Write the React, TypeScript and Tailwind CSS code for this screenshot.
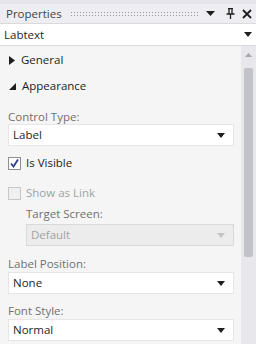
const font = { fontFamily: '"Open Sans", "Noto Sans", sans-serif' }

function Caret({ disabled }: { disabled?: boolean }) {
  return (
    <svg width="8" height="5" viewBox="0 0 8 5" className="shrink-0">
      <path d="M0 0 H8 L4 5 Z" fill={disabled ? '#c4c4c4' : '#1e1e1e'} />
    </svg>
  )
}

function Select({ value, disabled }: { value: string; disabled?: boolean }) {
  return (
    <div
      className={
        'flex h-[22px] items-center justify-between border pl-[4px] pr-[8px] text-[11.5px] ' +
        (disabled
          ? 'border-[#d9d9d9] bg-[#ececec] text-[#a2a2a2]'
          : 'border-[#e6e6e6] bg-white text-[#1e1e1e]')
      }
    >
      <span>{value}</span>
      <Caret disabled={disabled} />
    </div>
  )
}

function Section({ label, open }: { label: string; open?: boolean }) {
  return (
    <div className="flex h-[26px] items-center gap-[6px] pl-[9px] text-[11.5px] text-[#1e1e1e]">
      {open ? (
        <svg width="7" height="7" viewBox="0 0 7 7">
          <path d="M7 0 V7 H0 Z" fill="#1e1e1e" />
        </svg>
      ) : (
        <svg width="6" height="9" viewBox="0 0 6 9">
          <path d="M0 0 L6 4.5 L0 9 Z" fill="#1e1e1e" />
        </svg>
      )}
      <span>{label}</span>
    </div>
  )
}

function Field({
  label,
  children,
  className = '',
  gap = 'mt-0',
}: {
  label: string
  children: React.ReactNode
  className?: string
  gap?: string
}) {
  return (
    <div className={className}>
      <div className="h-[14px] text-[11.5px] leading-[14px] text-[#717171]">{label}</div>
      <div className={gap}>{children}</div>
    </div>
  )
}

export default function App() {
  return (
    <div className="h-[344px] w-[256px] overflow-hidden bg-[#f5f5f5]" style={font}>
      <div className="h-[4px] bg-[#e4e4ea]" />
      <div className="flex h-[19px] items-center bg-[#eeeef2] pl-[6px] pr-[4px] text-[11.5px] text-[#444]">
        <span>Properties</span>
        <div
          className="mx-[8px] h-[5px] flex-1"
          style={{ backgroundImage: 'radial-gradient(#999 0.6px, transparent 0.7px)', backgroundSize: '3px 3px' }}
        />
        <svg width="9" height="5" viewBox="0 0 9 5" className="mr-[11px]">
          <path d="M0 0 H9 L4.5 5 Z" fill="#1e1e1e" />
        </svg>
        <svg width="9" height="11" viewBox="0 0 9 11" className="mr-[7px]">
          <path d="M2 0.5 H7 M3 0.5 V6 M6 0.5 V6 M0.5 6 H8.5 M4.5 6 V11" stroke="#1e1e1e" strokeWidth="1.3" fill="none" />
        </svg>
        <svg width="10" height="10" viewBox="0 0 10 10">
          <path d="M1 1 L9 9 M9 1 L1 9" stroke="#1e1e1e" strokeWidth="1.8" />
        </svg>
      </div>
      <div className="flex h-[23px] items-center justify-between border-y border-[#dadada] bg-white pl-[4px] pr-[4px] text-[11.5px] text-[#1e1e1e]">
        <span>Labtext</span>
        <Caret />
      </div>
      <div className="flex">
        <div className="flex-1 pt-[1px]">
          <Section label="General" />
          <Section label="Appearance" open />
          <div className="pl-[8px] pr-[7px] pt-[11px]">
            <Field label="Control Type:">
              <Select value="Label" />
            </Field>
            <div className="mt-[8px] flex h-[18px] items-center gap-[5px] text-[11.5px] text-[#1e1e1e]">
              <div className="flex h-[13px] w-[13px] items-center justify-center border border-[#8e8f8f] bg-white">
                <svg width="9" height="9" viewBox="0 0 9 9">
                  <path d="M1 4.5 L3.5 7.5 L8 0.5" stroke="#2b3b8f" strokeWidth="1.8" fill="none" />
                </svg>
              </div>
              <span>Is Visible</span>
            </div>
            <div className="mt-[12px] flex h-[18px] items-center gap-[5px] text-[11.5px] text-[#a2a2a2]">
              <div className="h-[13px] w-[13px] border border-[#c8c8c8] bg-[#f0f0f0]" />
              <span>Show as Link</span>
            </div>
            <Field label="Target Screen:" className="ml-[18px] mt-[5px]" gap="mt-[3px]">
              <Select value="Default" disabled />
            </Field>
            <Field label="Label Position:" className="mt-[11px]" gap="mt-[1px]">
              <Select value="None" />
            </Field>
            <Field label="Font Style:" className="mt-[10px]" gap="mt-[1px]">
              <Select value="Normal" />
            </Field>
          </div>
        </div>
        <div className="flex h-[298px] w-[15px] flex-col items-center bg-[#e8e8ec] pt-[7px]">
          <svg width="7" height="4" viewBox="0 0 7 4">
            <path d="M0 4 L3.5 0 L7 4 Z" fill="#a8a8a8" />
          </svg>
          <div className="mt-[11px] h-[189px] w-[9px] rounded-[2px] bg-[#c2c3c9]" />
        </div>
      </div>
    </div>
  )
}
